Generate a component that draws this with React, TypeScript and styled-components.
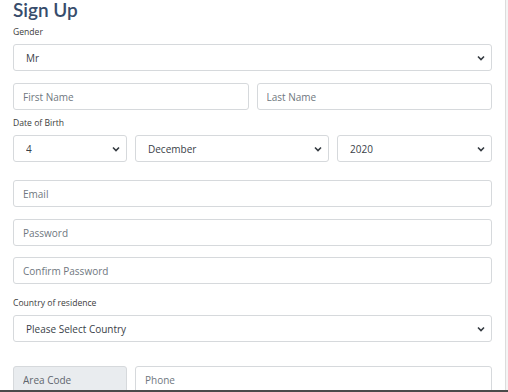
import React from 'react';
import styled, { createGlobalStyle, css } from 'styled-components';

const GlobalStyle = createGlobalStyle`
    html, body {
        margin: 0;
        padding: 0;
        background: #ffffff;
    }
    * {
        box-sizing: border-box;
    }
`;

const Screen = styled.div`
    width: 508px;
    height: 392px;
    overflow: hidden;
    display: grid;
    grid-template-rows: 390px 2px;
    font-family: "Open Sans", "Noto Sans", sans-serif;
`;

const Viewport = styled.div`
    display: grid;
    grid-template-columns: 505px 3px;
    overflow: hidden;
`;

const Gutter = styled.div`
    border-left: 1px solid #dcdcdc;
    background: #f4f4f4;
`;

const BottomEdge = styled.div`
    background: #4a4a4a;
`;

const Form = styled.form`
    padding: 0 13px;
    display: flex;
    flex-direction: column;
`;

const Title = styled.h1`
    margin: 0;
    font-family: Lato, "Open Sans", sans-serif;
    font-size: 19px;
    font-weight: 600;
    line-height: 20px;
    color: #374c6c;
`;

const Label = styled.label<{ $gap?: number }>`
    display: block;
    font-size: 8.6px;
    line-height: 12px;
    color: #3c3c3c;
    margin-top: ${(p) => p.$gap ?? 0}px;
    margin-bottom: 6px;
`;

const fieldBase = css`
    height: 27px;
    width: 100%;
    border: 1px solid #d6d9dc;
    border-radius: 3px;
    font-family: "Open Sans", "Noto Sans", sans-serif;
    font-size: 10px;
    background: #ffffff;
    outline: none;
`;

const Input = styled.input<{ $gap?: number; $addon?: boolean }>`
    ${fieldBase};
    padding: 0 9px;
    color: #495057;
    margin-top: ${(p) => p.$gap ?? 0}px;
    &::placeholder {
        color: #6f7780;
    }
    ${(p) => p.$addon && css`
        background: #e9ecef;
        &::placeholder { color: #5f666d; }
    `}
`;

const Select = styled.select<{ $gap?: number }>`
    ${fieldBase};
    appearance: none;
    -webkit-appearance: none;
    padding: 0 24px 0 12px;
    color: #3a4148;
    margin-top: ${(p) => p.$gap ?? 0}px;
    background-image: url("data:image/svg+xml,%3Csvg xmlns='http://www.w3.org/2000/svg' width='8' height='6' viewBox='0 0 8 6'%3E%3Cpath d='M1 1.5l3 3 3-3' fill='none' stroke='%23343a40' stroke-width='1.6'/%3E%3C/svg%3E");
    background-repeat: no-repeat;
    background-position: right 6px center;
    background-size: 8px 6px;
`;

const Row = styled.div<{ $cols: string; $gap?: number }>`
    display: grid;
    grid-template-columns: ${(p) => p.$cols};
    column-gap: 8px;
    margin-top: ${(p) => p.$gap ?? 0}px;
`;

export default function App() {
    return (
        <>
            <GlobalStyle />
            <Screen>
                <Viewport>
                    <Form onSubmit={(e) => e.preventDefault()}>
                        <Title>Sign Up</Title>
                        <Label $gap={6}>Gender</Label>
                        <Select defaultValue="Mr">
                            <option>Mr</option>
                            <option>Mrs</option>
                            <option>Ms</option>
                        </Select>
                        <Row $cols="1fr 1fr" $gap={12}>
                            <Input placeholder="First Name" />
                            <Input placeholder="Last Name" />
                        </Row>
                        <Label $gap={7}>Date of Birth</Label>
                        <Row $cols="114px 194px 1fr">
                            <Select defaultValue="4">
                                <option>4</option>
                            </Select>
                            <Select defaultValue="December">
                                <option>December</option>
                            </Select>
                            <Select defaultValue="2020">
                                <option>2020</option>
                            </Select>
                        </Row>
                        <Input placeholder="Email" $gap={18} />
                        <Input placeholder="Password" $gap={12} />
                        <Input placeholder="Confirm Password" $gap={11} />
                        <Label $gap={13}>Country of residence</Label>
                        <Select defaultValue="">
                            <option value="">Please Select Country</option>
                        </Select>
                        <Row $cols="114px 1fr" $gap={24}>
                            <Input placeholder="Area Code" $addon />
                            <Input placeholder="Phone" />
                        </Row>
                    </Form>
                    <Gutter />
                </Viewport>
                <BottomEdge />
            </Screen>
        </>
    );
}
